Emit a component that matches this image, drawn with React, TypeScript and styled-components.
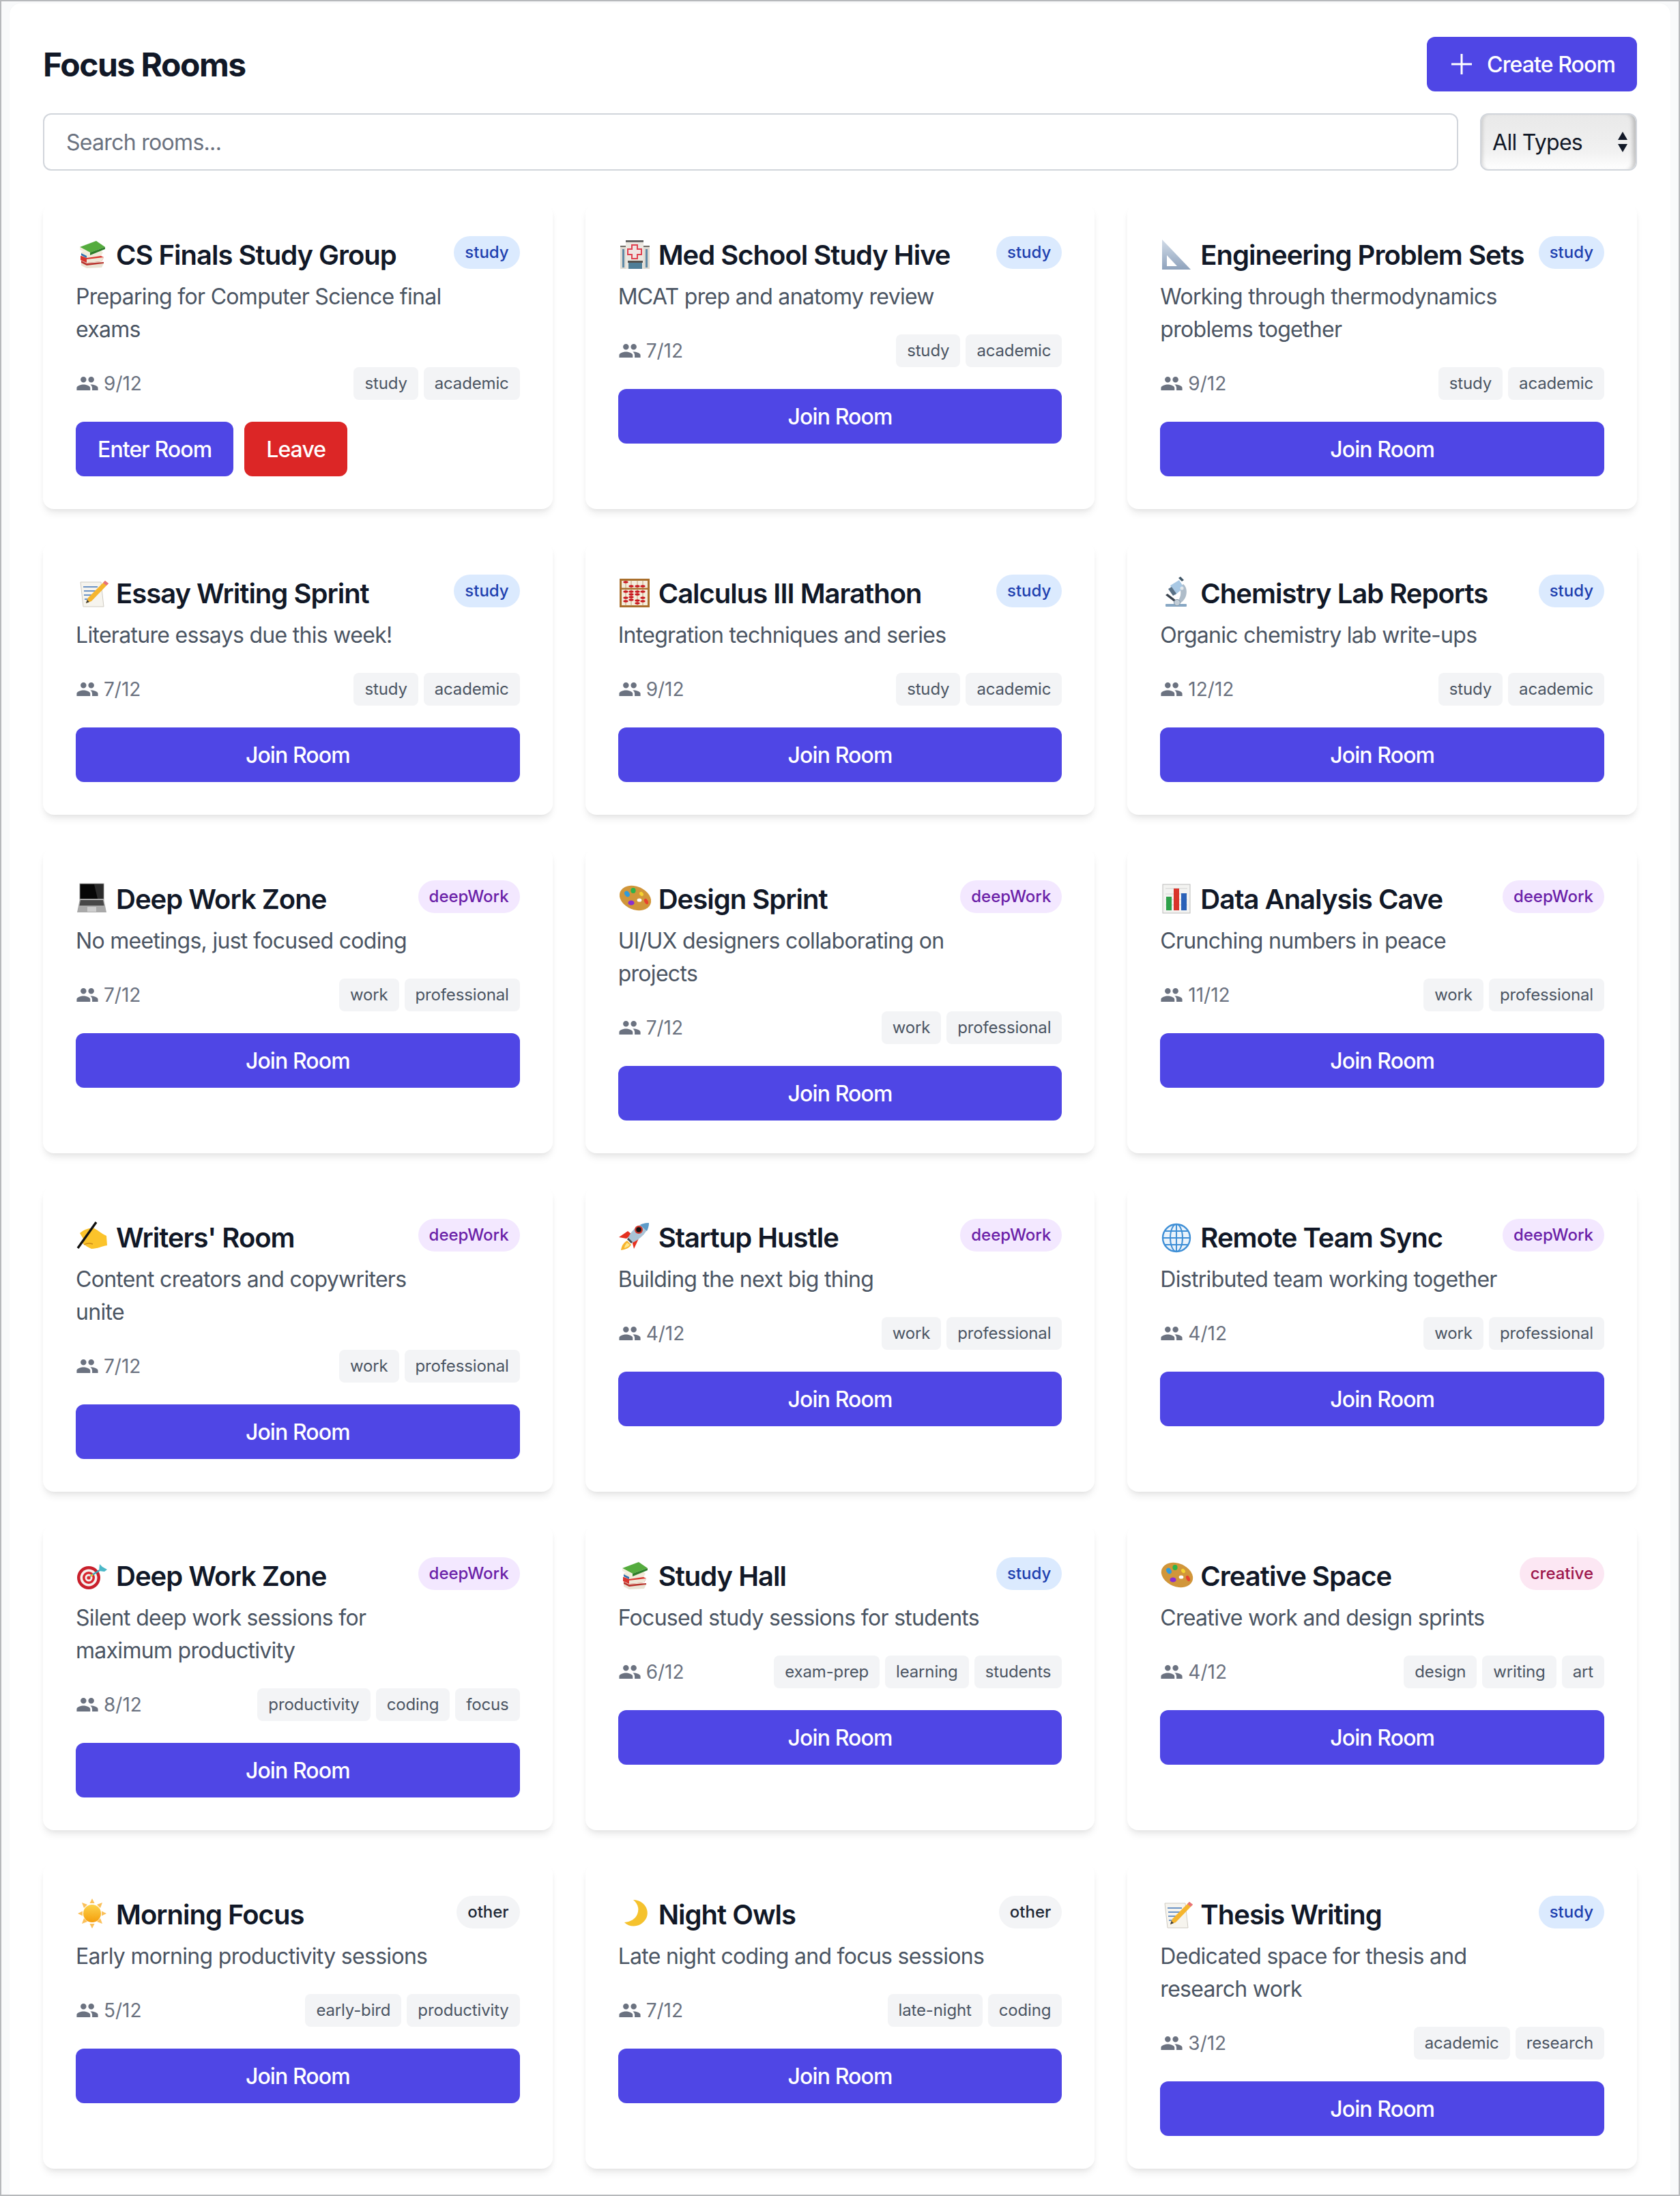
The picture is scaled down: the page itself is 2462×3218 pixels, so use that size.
import React from "react";
import styled, { createGlobalStyle } from "styled-components";

const GlobalStyle = createGlobalStyle`
  * { box-sizing: border-box; }
  html, body { margin: 0; padding: 0; background: #f9fafb; }
  body { font-family: Inter, "Liberation Sans", sans-serif; color: #111827; }
`;

const Frame = styled.div`
  width: 2462px;
  height: 3218px;
  border: 2px solid #b7b9bc;
  padding: 3px 12px 0;
  display: flex;
  background: #f9fafb;
`;

const Panel = styled.main`
  flex: 1;
  min-width: 0;
  background: #fff;
  border-radius: 16px 16px 0 0;
  padding: 49px 49px 0;
  box-shadow: 0 0 2px rgba(0, 0, 0, 0.04);
`;

const TopBar = styled.header`
  display: flex;
  justify-content: space-between;
  align-items: center;
  margin-bottom: 32px;
`;

const PageTitle = styled.h1`
  margin: 0;
  padding-top: 2px;
  font-size: 48px;
  line-height: 64px;
  font-weight: 700;
  letter-spacing: -1.5px;
  color: #111827;
`;

const Button = styled.button<{ $tone?: "primary" | "danger"; $wide?: boolean }>`
  display: inline-flex;
  align-items: center;
  justify-content: center;
  gap: 16px;
  height: 80px;
  padding: 0 32px;
  border: 0;
  border-radius: 12px;
  width: ${(p) => (p.$wide ? "100%" : "auto")};
  background: ${(p) => (p.$tone === "danger" ? "#dc2626" : "#4f46e5")};
  color: #fff;
  font-family: inherit;
  font-size: 32px;
  font-weight: 500;
  letter-spacing: -0.9px;
`;

const FilterBar = styled.div`
  display: flex;
  gap: 32px;
  margin-bottom: 48px;
`;

const Search = styled.input`
  flex: 1;
  height: 84px;
  padding: 0 32px;
  border: 2px solid #d1d5db;
  border-radius: 12px;
  background: #fff;
  font-family: inherit;
  font-size: 32px;
  letter-spacing: -0.7px;
  color: #111827;
  &::placeholder {
    color: #6b7280;
    opacity: 1;
  }
`;

const SelectWrap = styled.div`
  position: relative;
  flex: 0 0 230px;
`;

const Select = styled.select`
  appearance: none;
  width: 100%;
  height: 84px;
  padding: 0 16px;
  border: 2px solid #d1d5db;
  border-radius: 12px;
  background: linear-gradient(#e9e9e9, #eeeeee 45%, #f2f2f2 70%, #ffffff);
  box-shadow: inset 6px 0 5px -4px rgba(0, 0, 0, 0.14),
    inset -8px 0 6px -4px rgba(0, 0, 0, 0.22);
  font-family: inherit;
  font-size: 32px;
  letter-spacing: -0.7px;
  color: #111827;
`;

const SelectArrows = styled.svg`
  position: absolute;
  right: 13px;
  top: 27px;
  width: 16px;
  height: 30px;
  pointer-events: none;
`;

const Grid = styled.section`
  display: grid;
  grid-template-columns: repeat(3, minmax(0, 1fr));
  gap: 48px;
`;

const Card = styled.article`
  background: #fff;
  border-radius: 16px;
  padding: 48px;
  box-shadow: 0 8px 12px -2px rgba(0, 0, 0, 0.08),
    0 4px 8px -4px rgba(0, 0, 0, 0.08);
`;

const CardHead = styled.div`
  display: flex;
  justify-content: space-between;
  align-items: flex-start;
  margin-bottom: 31px;
`;

const CardHeadText = styled.div`
  flex: 1;
  min-width: 0;
`;

const CardTitle = styled.h3`
  display: flex;
  align-items: center;
  gap: 11px;
  margin: 0 0 9px;
  font-size: 40px;
  line-height: 56px;
  font-weight: 600;
  letter-spacing: -1px;
  color: #111827;
  white-space: nowrap;
`;

const Description = styled.p`
  margin: 0;
  font-size: 32px;
  line-height: 48px;
  letter-spacing: -0.7px;
  color: #4b5563;
`;

const kindColors = {
  study: { bg: "#dbeafe", fg: "#1e40af" },
  deepWork: { bg: "#f3e8ff", fg: "#6b21a8" },
  creative: { bg: "#fce7f3", fg: "#9d174d" },
  other: { bg: "#f3f4f6", fg: "#1f2937" },
};

type Kind = keyof typeof kindColors;

const Pill = styled.span<{ $kind: Kind }>`
  flex: none;
  padding: 8px 16px;
  border-radius: 999px;
  font-size: 24px;
  line-height: 32px;
  font-weight: 500;
  background: ${(p) => kindColors[p.$kind].bg};
  color: ${(p) => kindColors[p.$kind].fg};
`;

const Meta = styled.div`
  display: flex;
  justify-content: space-between;
  align-items: center;
  margin-bottom: 32px;
`;

const Count = styled.div`
  display: flex;
  align-items: center;
  gap: 7px;
  font-size: 28px;
  line-height: 40px;
  color: #6b7280;
  svg {
    width: 34px;
    height: 34px;
    fill: #6b7280;
  }
`;

const Tags = styled.div`
  display: flex;
  gap: 8px;
`;

const Tag = styled.span`
  padding: 8px 16px;
  border-radius: 8px;
  background: #f3f4f6;
  color: #4b5563;
  font-size: 24px;
  line-height: 32px;
  letter-spacing: -0.15px;
`;

const Actions = styled.div`
  display: flex;
  gap: 16px;
`;

const Glyph = styled.svg.attrs({ viewBox: "6 10 48 48" })`
  flex: none;
  width: 48px;
  height: 48px;
  overflow: visible;
`;

const Books = () => (
  <Glyph>
    <path d="M14 42l26 1 7 3-3 6-22 1-8-4z" fill="#e9e3d4" />
    <path d="M14 42l8 4 25-2v2l-25 3-8-4z" fill="#b9342e" />
    <path d="M13 35l26-2 8 4-3 6-22 2-9-4z" fill="#d8352e" />
    <path d="M22 40l25-3-3 6-22 2z" fill="#efe8d8" />
    <path d="M14 29l27-3 5 4-3 5-21 3-8-3z" fill="#f1ead9" />
    <path d="M14 31l8 4v3l-8-4z" fill="#2f6fb0" />
    <path d="M12 22l24-9 13 9-22 8z" fill="#55ac3e" />
    <path d="M12 22l15 8v4l-15-8z" fill="#f4eedd" />
    <path d="M27 30l22-8v3l-22 9z" fill="#2e7d2a" />
  </Glyph>
);

const Hospital = () => (
  <Glyph>
    <rect x="9" y="21" width="8" height="33" fill="#dedad2" />
    <rect x="43" y="21" width="9" height="33" fill="#dedad2" />
    <rect x="9" y="20" width="8" height="2" fill="#6e6a64" />
    <rect x="43" y="20" width="9" height="2" fill="#6e6a64" />
    <rect x="12" y="25" width="3" height="27" fill="#5f8aa6" />
    <rect x="46" y="25" width="3" height="27" fill="#5f8aa6" />
    <rect x="17" y="13" width="26" height="41" fill="#ebe7e0" />
    <rect x="17" y="12" width="26" height="3" fill="#666" />
    <path d="M26 19h8v6h6v8h-6v6h-8v-6h-6v-8h6z" fill="#f0e4e2" stroke="#e0404f" strokeWidth="2" />
    <rect x="21" y="44" width="20" height="10" fill="#4e7d97" />
    <path d="M20 42h22v3H20z" fill="#55514d" />
  </Glyph>
);

const Ruler = () => (
  <Glyph>
    <defs>
      <linearGradient id="ruler" x1="0" y1="0" x2="0" y2="1">
        <stop offset="0" stopColor="#d2dce8" />
        <stop offset="1" stopColor="#8ea2bc" />
      </linearGradient>
    </defs>
    <path fillRule="evenodd" d="M9 11l42 44H9zM16 34v16h15z" fill="url(#ruler)" />
  </Glyph>
);

const Memo = () => (
  <Glyph>
    <path d="M13 17h30l4 36H17z" fill="#f6f4ee" stroke="#cfcbc2" />
    <path d="M17 24h21M18 30h18M18 36h14M19 42h11" stroke="#6d94c6" strokeWidth="2" />
    <path d="M49 15l5 4-25 26-8 3 3-8z" fill="#f5b52e" />
    <path d="M49 15l5 4-3 3-5-4z" fill="#e7707c" />
    <path d="M21 48l1.6-5 3.4 3z" fill="#3b3b3b" />
  </Glyph>
);

const Abacus = () => {
  const beads = [
    [17, 17], [25, 23], [34, 23], [42, 23],
    [17, 31], [25, 31], [34, 31], [42, 31],
    [25, 35], [34, 35],
    [17, 40], [25, 39], [34, 44], [42, 40],
    [17, 45], [25, 43], [34, 48], [42, 45],
  ];
  return (
    <Glyph>
      <rect x="9.5" y="13.5" width="41" height="39" fill="#f4ecdc" stroke="#a96e2c" strokeWidth="3" />
      <path d="M17 14v38M25 14v38M34 14v38M42 14v38" stroke="#b58a55" strokeWidth="0.8" />
      <rect x="9" y="25.5" width="42" height="2.4" fill="#a96e2c" />
      {beads.map(([cx, cy]) => (
        <ellipse key={`${cx}-${cy}`} cx={cx} cy={cy} rx="3.6" ry="1.7" fill="#c9151d" />
      ))}
    </Glyph>
  );
};

const Microscope = () => (
  <Glyph>
    <path d="M40 20c7 5 7 20-3 27h-8c8-5 9-16 5-23z" fill="#aebcc9" />
    <path d="M21 22l13-8 7 11-13 11z" fill="#a8c8e4" />
    <path d="M33 11l3-2 5 5-3 2z" fill="#3f5566" />
    <path d="M18 27l5-3 7 10-5 3z" fill="#5a7186" />
    <path d="M14 36l3-2 13 10-3 2z" fill="#39424d" />
    <rect x="14" y="49" width="31" height="4" rx="1" fill="#86a6c3" />
    <circle cx="31" cy="47" r="4.5" fill="#c3ced8" stroke="#8397a8" />
    <circle cx="38" cy="26" r="2.5" fill="#e3e7ea" />
  </Glyph>
);

const Laptop = () => (
  <Glyph>
    <rect x="12" y="11" width="35" height="23" fill="#060606" stroke="#8d8d8d" />
    <path d="M33 12h13v21h-8z" fill="#2b2b2b" />
    <path d="M12 33h35l4 20H8z" fill="#a9a9a9" />
    <path d="M13 35h33l1.5 8h-36z" fill="#474747" />
    <rect x="23" y="45" width="13" height="7" fill="#cdcdcd" />
  </Glyph>
);

const Palette = () => (
  <Glyph>
    <ellipse cx="31" cy="32" rx="24" ry="17" transform="rotate(22 31 32)" fill="#d1963a" />
    <ellipse cx="37" cy="35" rx="3.4" ry="2.6" fill="#fff" />
    <ellipse cx="19" cy="26" rx="3.4" ry="4.6" transform="rotate(-35 19 26)" fill="#2f9bdd" />
    <ellipse cx="28" cy="21" rx="3.6" ry="4" fill="#2db34a" />
    <ellipse cx="40" cy="26" rx="2.6" ry="3.4" transform="rotate(-35 40 26)" fill="#f4d230" />
    <ellipse cx="47" cy="37" rx="2.6" ry="4.4" transform="rotate(-25 47 37)" fill="#e8432e" />
    <ellipse cx="25" cy="39" rx="4.6" ry="3.6" fill="#8a2fd0" />
  </Glyph>
);

const Chart = () => (
  <Glyph>
    <rect x="10" y="12" width="40" height="42" fill="#f3f3f1" stroke="#bcbcbc" />
    <path d="M14 18h32M14 26h32M14 34h32M14 42h32" stroke="#d4d4d4" />
    <rect x="15" y="30" width="8" height="20" fill="#2ea14a" />
    <rect x="26" y="18" width="8" height="32" fill="#d9342b" />
    <rect x="37" y="25" width="8" height="25" fill="#2b62b8" />
  </Glyph>
);

const Hand = () => (
  <Glyph>
    <path d="M12 27c6-5 13-8 21-7 6 3 11 8 18 11l1 14c-8 1-14 5-23 5-5-2-9-5-13-8l2-5z" fill="#fbc32b" />
    <path d="M18 44c5-3 10-2 13-1" stroke="#c98a1a" strokeWidth="1.4" fill="none" />
    <path d="M36 11L9 49" stroke="#111" strokeWidth="3.4" />
  </Glyph>
);

const Rocket = () => (
  <Glyph>
    <path d="M20 24L7 33l11 2 8-6z" fill="#e5301f" />
    <path d="M37 33l-8 17-3-12 6-7z" fill="#e5301f" />
    <path d="M19 38l6 6c-3 5-8 7-15 8 1-7 4-11 9-14z" fill="#f7b32b" />
    <path d="M19 41l4 3c-2 3-5 4-8 5 0-3 2-6 4-8z" fill="#fde68a" />
    <path d="M51 12c-14 0-24 8-32 24l6 6c15-7 25-17 26-30z" fill="#a9c3d6" />
    <path d="M51 12c-5 0-9 1-13 3l10 9c2-4 3-8 3-12z" fill="#5e9cc9" />
    <circle cx="36" cy="22" r="6" fill="#d1352a" />
    <circle cx="36" cy="22" r="3.8" fill="#141414" />
    <path d="M19 36l6 6 2-2-6-6z" fill="#4b4b4b" />
  </Glyph>
);

const Globe = () => (
  <Glyph>
    <circle cx="30" cy="34" r="20" fill="#eaf3fb" stroke="#3f8fd6" strokeWidth="2.4" />
    <ellipse cx="30" cy="34" rx="9" ry="20" fill="none" stroke="#3f8fd6" strokeWidth="2" />
    <path d="M30 14v40M10 34h40M13 24h34M13 44h34" stroke="#3f8fd6" strokeWidth="2" />
  </Glyph>
);

const Target = () => (
  <Glyph>
    <circle cx="25" cy="36" r="17" fill="#c9202c" />
    <circle cx="25" cy="36" r="12.5" fill="#f6f1ee" />
    <circle cx="25" cy="36" r="9" fill="#d7262f" />
    <circle cx="25" cy="36" r="5.5" fill="#f6f1ee" />
    <circle cx="25" cy="36" r="2.6" fill="#d7262f" />
    <path d="M27 34l14-9" stroke="#38a5b8" strokeWidth="2.4" />
    <path d="M28 33.5l3-2" stroke="#f2c230" strokeWidth="2.6" />
    <path d="M40 26l1-10 4 4 7 4-4 3z" fill="#4bb8c8" />
  </Glyph>
);

const Sun = () => (
  <Glyph>
    <defs>
      <linearGradient id="sun" x1="0" y1="0" x2="0" y2="1">
        <stop offset="0" stopColor="#fcd34d" />
        <stop offset="1" stopColor="#f59e0b" />
      </linearGradient>
    </defs>
    <path
      d="M30 10l3.5 7h-7zM30 54l3.5-7h-7zM9 32l7-3.5v7zM51 32l-7-3.5v7zM15 16l8 3-5 5zM45 16l-8 3 5 5zM15 47l8-3-5-5zM45 47l-8-3 5-5z"
      fill="#fbc05a"
    />
    <circle cx="30" cy="32" r="13" fill="url(#sun)" />
  </Glyph>
);

const Moon = () => (
  <Glyph>
    <path d="M28 12c7 6 9 13 6 21-3 7-9 11-19 12 9 9 25 7 32-6 6-13-4-27-19-27z" fill="#f5c22e" />
  </Glyph>
);

const emoji = {
  books: Books,
  hospital: Hospital,
  ruler: Ruler,
  memo: Memo,
  abacus: Abacus,
  microscope: Microscope,
  laptop: Laptop,
  palette: Palette,
  chart: Chart,
  hand: Hand,
  rocket: Rocket,
  globe: Globe,
  target: Target,
  sun: Sun,
  moon: Moon,
};

interface Room {
  icon: keyof typeof emoji;
  name: string;
  description: string;
  kind: Kind;
  members: number;
  tags: string[];
  joined?: boolean;
}

const academic = ["study", "academic"];
const professional = ["work", "professional"];

const rooms: Room[] = [
  { icon: "books", name: "CS Finals Study Group", description: "Preparing for Computer Science final exams", kind: "study", members: 9, tags: academic, joined: true },
  { icon: "hospital", name: "Med School Study Hive", description: "MCAT prep and anatomy review", kind: "study", members: 7, tags: academic },
  { icon: "ruler", name: "Engineering Problem Sets", description: "Working through thermodynamics problems together", kind: "study", members: 9, tags: academic },
  { icon: "memo", name: "Essay Writing Sprint", description: "Literature essays due this week!", kind: "study", members: 7, tags: academic },
  { icon: "abacus", name: "Calculus III Marathon", description: "Integration techniques and series", kind: "study", members: 9, tags: academic },
  { icon: "microscope", name: "Chemistry Lab Reports", description: "Organic chemistry lab write-ups", kind: "study", members: 12, tags: academic },
  { icon: "laptop", name: "Deep Work Zone", description: "No meetings, just focused coding", kind: "deepWork", members: 7, tags: professional },
  { icon: "palette", name: "Design Sprint", description: "UI/UX designers collaborating on projects", kind: "deepWork", members: 7, tags: professional },
  { icon: "chart", name: "Data Analysis Cave", description: "Crunching numbers in peace", kind: "deepWork", members: 11, tags: professional },
  { icon: "hand", name: "Writers' Room", description: "Content creators and copywriters unite", kind: "deepWork", members: 7, tags: professional },
  { icon: "rocket", name: "Startup Hustle", description: "Building the next big thing", kind: "deepWork", members: 4, tags: professional },
  { icon: "globe", name: "Remote Team Sync", description: "Distributed team working together", kind: "deepWork", members: 4, tags: professional },
  { icon: "target", name: "Deep Work Zone", description: "Silent deep work sessions for maximum productivity", kind: "deepWork", members: 8, tags: ["productivity", "coding", "focus"] },
  { icon: "books", name: "Study Hall", description: "Focused study sessions for students", kind: "study", members: 6, tags: ["exam-prep", "learning", "students"] },
  { icon: "palette", name: "Creative Space", description: "Creative work and design sprints", kind: "creative", members: 4, tags: ["design", "writing", "art"] },
  { icon: "sun", name: "Morning Focus", description: "Early morning productivity sessions", kind: "other", members: 5, tags: ["early-bird", "productivity"] },
  { icon: "moon", name: "Night Owls", description: "Late night coding and focus sessions", kind: "other", members: 7, tags: ["late-night", "coding"] },
  { icon: "memo", name: "Thesis Writing", description: "Dedicated space for thesis and research work", kind: "study", members: 3, tags: ["academic", "research"] },
];

const RoomCard = ({ room }: { room: Room }) => {
  const Icon = emoji[room.icon];
  return (
    <Card>
      <CardHead>
        <CardHeadText>
          <CardTitle>
            <Icon />
            {room.name}
          </CardTitle>
          <Description>{room.description}</Description>
        </CardHeadText>
        <Pill $kind={room.kind}>{room.kind}</Pill>
      </CardHead>
      <Meta>
        <Count>
          <svg viewBox="0 0 24 24">
            <path d="M16 11c1.66 0 2.99-1.34 2.99-3S17.66 5 16 5c-1.66 0-3 1.34-3 3s1.34 3 3 3zm-8 0c1.66 0 2.99-1.34 2.99-3S9.66 5 8 5C6.34 5 5 6.34 5 8s1.34 3 3 3zm0 2c-2.33 0-7 1.17-7 3.5V19h14v-2.5c0-2.33-4.67-3.5-7-3.5zm8 0c-.29 0-.62.02-.97.05 1.16.84 1.97 1.97 1.97 3.45V19h6v-2.5c0-2.33-4.67-3.5-7-3.5z" />
          </svg>
          {room.members}/12
        </Count>
        <Tags>
          {room.tags.map((tag) => (
            <Tag key={tag}>{tag}</Tag>
          ))}
        </Tags>
      </Meta>
      {room.joined ? (
        <Actions>
          <Button>Enter Room</Button>
          <Button $tone="danger">Leave</Button>
        </Actions>
      ) : (
        <Button $wide>Join Room</Button>
      )}
    </Card>
  );
};

export default function App() {
  return (
    <>
      <GlobalStyle />
      <Frame>
        <Panel>
          <TopBar>
            <PageTitle>Focus Rooms</PageTitle>
            <Button>
              <svg width="40" height="40" viewBox="0 0 40 40" fill="none" stroke="#fff" strokeWidth="3">
                <path d="M19 5v30M4 20h30" />
              </svg>
              Create Room
            </Button>
          </TopBar>
          <FilterBar>
            <Search placeholder="Search rooms..." />
            <SelectWrap>
              <Select defaultValue="all">
                <option value="all">All Types</option>
              </Select>
              <SelectArrows viewBox="0 0 16 30">
                <path d="M8 0l7 12H1zM8 30l7-12H1z" fill="#111827" />
              </SelectArrows>
            </SelectWrap>
          </FilterBar>
          <Grid>
            {rooms.map((room) => (
              <RoomCard key={`${room.name}-${room.icon}`} room={room} />
            ))}
          </Grid>
        </Panel>
      </Frame>
    </>
  );
}
